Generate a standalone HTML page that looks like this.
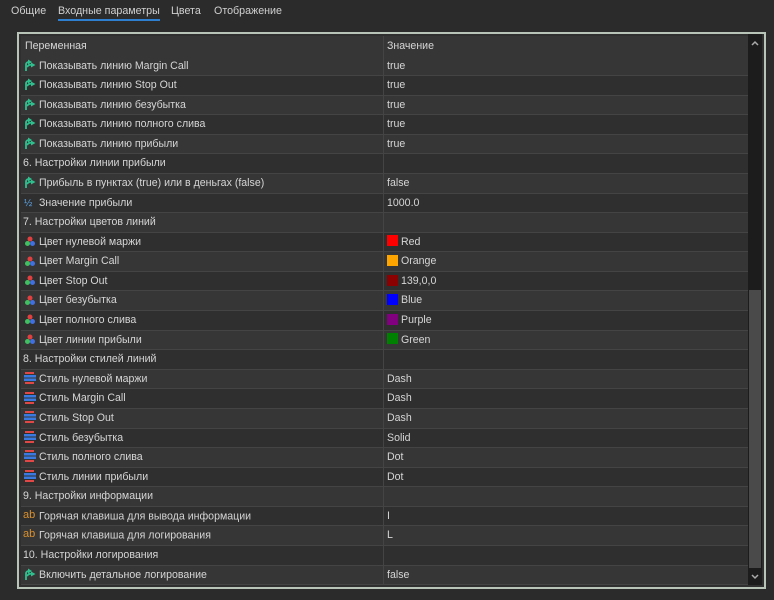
<!DOCTYPE html><html><head><meta charset="utf-8"><style>
body{margin:0;width:774px;height:600px;background:#2b2b2b;font-family:"Liberation Sans",sans-serif;font-size:10.6px;color:#d6d6d6;position:relative;overflow:hidden}
.tab{position:absolute;top:5px;font-size:10.7px;color:#d0d0d0}
.frame{position:absolute;left:17px;top:32px;width:745px;height:553px;border:2px solid #b9c4b9;background:#2f2f2f}
.row{position:absolute;left:2px;width:727px;height:19.58px;border-bottom:1px solid #444;box-sizing:border-box;line-height:19px}
.row.a{background:#363636}.row.b{background:#2f2f2f}
.c1{position:absolute;left:2px;top:0}
.c2{position:absolute;left:366px;top:0}
.div{position:absolute;left:362px;top:0;width:1px;height:100%;background:#444}
.ic{display:inline-block;width:14px;margin-right:2px;vertical-align:middle;position:relative;top:-1px}
.sw{display:inline-block;width:11px;height:11px;vertical-align:middle;margin-right:3px;position:relative;top:-1px}
.sb{position:absolute;left:729px;top:0;width:14px;height:551px;background:#1c1c1c}
.th{position:absolute;left:1px;top:256px;width:12px;height:278px;background:#4a4a4a}
</style></head><body>
<div class="tab" style="left:11px">Общие</div>
<div class="tab" style="left:58px">Входные параметры</div>
<div style="position:absolute;left:58px;top:19px;width:102px;height:2px;background:#2f7fd0"></div>
<div class="tab" style="left:171px">Цвета</div>
<div class="tab" style="left:214px">Отображение</div>
<div class="frame">
<div class="row a" style="top:2px;height:22px;line-height:21px"><span class="c1" style="left:4px">Переменная</span><div class="div"></div><span class="c2">Значение</span></div>
<div id="rows"></div>
<div class="sb"><svg style="position:absolute;left:3px;top:6px" width="8" height="6"><path d="M1 5L4 2L7 5" stroke="#aaa" stroke-width="1.5" fill="none"/></svg><div class="th"></div><svg style="position:absolute;left:3px;top:540px" width="8" height="6"><path d="M1 1L4 4L7 1" stroke="#aaa" stroke-width="1.5" fill="none"/></svg></div>
</div>
<script>
var B='<svg class="ic" width="14" height="12" viewBox="0 0 14 12"><path d="M3 12V6Q3 3 6 3M4 8Q6 5 9 6" stroke="#2fbf8f" stroke-width="1.8" fill="none"/><path d="M5 0.5L9 3L5 5.5Z M8 3.5L12.5 6L8 8.5Z" fill="#2fbf8f"/></svg>';
var H='<svg class="ic" width="14" height="12"><text x="1" y="10" font-size="10" fill="#5aa0e0" font-family="Liberation Sans">½</text></svg>';
var C='<svg class="ic" width="14" height="12"><circle cx="7" cy="4" r="2.5" fill="#e04040"/><circle cx="4.5" cy="8.5" r="2.5" fill="#40c060"/><circle cx="9.5" cy="8.5" r="2.5" fill="#4070e0"/></svg>';
var S='<svg class="ic" width="14" height="12"><rect x="2" y="0" width="9" height="2" fill="#e04848"/><rect x="1" y="3" width="12" height="2.5" fill="#3a7ae0"/><rect x="1" y="6.5" width="12" height="2.5" fill="#3a7ae0"/><rect x="2" y="10" width="9" height="2" fill="#e04848"/></svg>';
var A='<span class="ic" style="color:#d89030;font-size:11px">ab</span>';
var R=[[B,'Показывать линию Margin Call','true'],[B,'Показывать линию Stop Out','true'],[B,'Показывать линию безубытка','true'],[B,'Показывать линию полного слива','true'],[B,'Показывать линию прибыли','true'],['','6. Настройки линии прибыли',''],[B,'Прибыль в пунктах (true) или в деньгах (false)','false'],[H,'Значение прибыли','1000.0'],['','7. Настройки цветов линий',''],
[C,'Цвет нулевой маржи','#ff0000|Red'],[C,'Цвет Margin Call','#ffa500|Orange'],[C,'Цвет Stop Out','#8b0000|139,0,0'],[C,'Цвет безубытка','#0000ff|Blue'],[C,'Цвет полного слива','#800080|Purple'],[C,'Цвет линии прибыли','#008000|Green'],['','8. Настройки стилей линий',''],
[S,'Стиль нулевой маржи','Dash'],[S,'Стиль Margin Call','Dash'],[S,'Стиль Stop Out','Dash'],[S,'Стиль безубытка','Solid'],[S,'Стиль полного слива','Dot'],[S,'Стиль линии прибыли','Dot'],['','9. Настройки информации',''],[A,'Горячая клавиша для вывода информации','I'],[A,'Горячая клавиша для логирования','L'],['','10. Настройки логирования',''],[B,'Включить детальное логирование','false']];
var h='';R.forEach(function(r,i){var v=r[2];if(v.indexOf('|')>0){var p=v.split('|');v='<span class="sw" style="background:'+p[0]+'"></span>'+p[1];}
h+='<div class="row '+(i%2?'b':'a')+'" style="top:'+(22.5+i*19.58)+'px"><span class="c1">'+r[0]+r[1]+'</span><div class="div"></div><span class="c2">'+v+'</span></div>';});
document.getElementById('rows').innerHTML=h;
</script>
</body></html>
